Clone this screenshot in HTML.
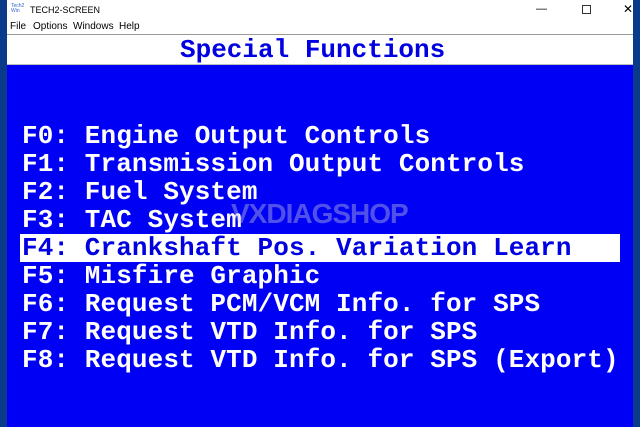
<!DOCTYPE html>
<html><head><style>
*{margin:0;padding:0;box-sizing:border-box}
body{width:640px;height:427px;overflow:hidden;background:#0a3a8a;position:relative;font-family:"Liberation Sans",sans-serif}
#win{position:absolute;left:7px;top:0;width:626px;height:427px;background:#fff}
.tb{position:absolute;left:0;top:0;height:20px;width:100%;font-size:9px;color:#000}
.menu{position:absolute;top:20px;left:0;height:15px;width:100%;font-size:10px;border-bottom:1px solid #999}
.menu span{position:absolute;top:1px}
.title{position:absolute;top:36px;left:0;width:100%;height:29px;background:#fff;border-bottom:1px solid #bbb}
.mono{font-family:"Liberation Mono",monospace;font-weight:bold;font-size:26px;white-space:pre;position:absolute;line-height:28px}
#blue{position:absolute;left:0;top:65px;width:100%;height:362px;background:#0000f4}
.hl{position:absolute;left:13px;top:169px;width:600px;height:28px;background:#fff}
</style></head><body>
<div id="win">
<div class="tb"><span style="position:absolute;left:4px;top:4px;font-size:5px;color:#36c;line-height:5px">Tech2<br>Win</span><span style="position:absolute;left:23px;top:5px">TECH2-SCREEN</span>
<span style="position:absolute;left:529px;top:3px;font-size:11px">—</span>
<span style="position:absolute;left:575px;top:5px;width:9px;height:9px;border:1px solid #333"></span>
<span style="position:absolute;left:616px;top:2px;font-size:12px">✕</span></div>
<div class="menu"><span style="left:3px">File</span><span style="left:26px">Options</span><span style="left:66px">Windows</span><span style="left:112px">Help</span></div>
<div class="title"><div class="mono" style="left:173px;top:0;color:#0000e0">Special Functions</div></div>
<div id="blue">
<div class="hl"></div>
<div class="mono" style="left:15px;top:57px;color:#fff;letter-spacing:0.1px">F0: Engine Output Controls
F1: Transmission Output Controls
F2: Fuel System
F3: TAC System
<span style="color:#0000e0">F4: Crankshaft Pos. Variation Learn</span>
F5: Misfire Graphic
F6: Request PCM/VCM Info. for SPS
F7: Request VTD Info. for SPS
F8: Request VTD Info. for SPS (Export)</div>
<div style="position:absolute;left:224px;top:133px;font-size:28px;font-weight:bold;color:rgba(200,200,220,0.4);letter-spacing:-1px">VXDIAGSHOP</div>
</div>
</div>
</body></html>
